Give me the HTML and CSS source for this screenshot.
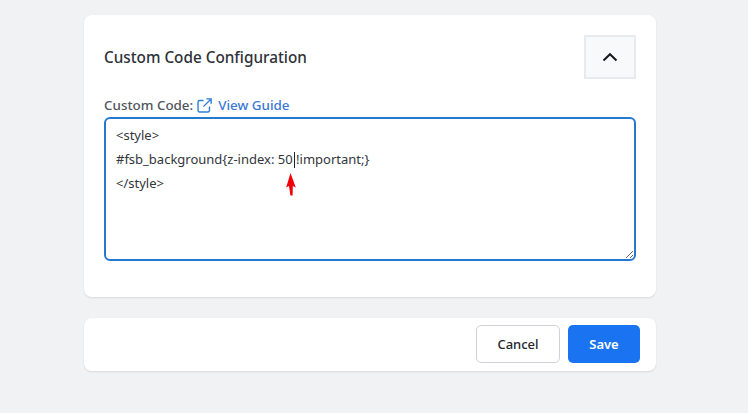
FILE: index.html
```html
<!DOCTYPE html>
<html lang="en">
<head>
  <meta charset="utf-8">
  <title>Custom Code Configuration</title>
  <link rel="stylesheet" href="styles.css">
</head>
<body>
  <div class="container">
    <section class="card config-card">
      <div class="card-header">
        <h2>Custom Code Configuration</h2>
        <button class="toggle-button" type="button" aria-label="Collapse">
          <svg width="16" height="10" viewBox="0 0 16 10"><path d="M1.500 8.500 8 2.200l6.500 6.300" fill="none" stroke="#16181b" stroke-width="2"/></svg>
        </button>
      </div>
      <div class="field-label">
        <span>Custom Code:</span>
        <a href="#" class="guide-link">
          <svg width="15" height="15" viewBox="0 0 16 16" fill="none" stroke="#2f7fd8" stroke-width="1.500">
            <path d="M7 2.700H2.600a1.500 1.500 0 0 0-1.500 1.500v9.200a1.500 1.500 0 0 0 1.500 1.500h9.200a1.500 1.500 0 0 0 1.500-1.500V9"/>
            <path d="M10 .9h5.100V6M15 1 6.800 9.200"/>
          </svg>
          View Guide
        </a>
      </div>
      <div class="code-wrap">
        <textarea class="code-input" spellcheck="false">&lt;style&gt;
#fsb_background{z-index: 50 !important;}
&lt;/style&gt;</textarea>
        <span class="text-caret"></span>
        <svg class="red-arrow" width="10" height="23" viewBox="0 0 10 23"><path d="M4.500 0 9.800 14.500 6.800 13 6.600 22.500 4.400 22.500 3 13 .2 14.500Z" fill="#f00008"/></svg>
      </div>
    </section>

    <section class="card action-card">
      <button class="btn btn-cancel" type="button">Cancel</button>
      <button class="btn btn-save" type="button">Save</button>
    </section>
  </div>
</body>
</html>
```

FILE: styles.css
```css
body {
  font-family: "Noto Sans", Arial, sans-serif;
  margin: 0;
  height: 413px;
  overflow: hidden;
  background-color: #f0f2f4;
}
.container {
  width: 572px;
  margin-left: 84px;
  padding-top: 15px;
}
.card {
  background-color: #fff;
  border-radius: 8px;
  box-shadow: 0 1px 2px rgba(0,0,0,0.1);
}
.config-card {
  height: 282px;
  box-sizing: border-box;
  padding: 20px;
  margin-bottom: 21px;
}
.card-header {
  display: flex;
  justify-content: space-between;
  align-items: center;
  height: 44px;
  margin-bottom: 17px;
}
h2 {
  margin: 0;
  font-size: 15.300px;
  font-weight: 500;
  color: #2e3138;
}
.toggle-button {
  display: flex;
  justify-content: center;
  align-items: center;
  width: 52px;
  height: 44px;
  padding: 0;
  background-color: #f7f9fb;
  border: 2px solid #e8eaed;
}
.field-label {
  display: flex;
  align-items: center;
  gap: 4px;
  height: 18px;
  margin-bottom: 3px;
  font-size: 13.400px;
  font-weight: 500;
  color: #50555c;
}
.guide-link {
  display: flex;
  align-items: center;
  gap: 6px;
  color: #3a78d6;
  text-decoration: none;
}
.code-wrap {
  position: relative;
  height: 144px;
}
.code-input {
  display: block;
  width: 100%;
  height: 100%;
  box-sizing: border-box;
  padding: 4px 10px;
  font-family: "Noto Sans", Arial, sans-serif;
  font-size: 13px;
  line-height: 24px;
  color: #33363b;
  background-color: #fff;
  border: 2px solid #2578d0;
  border-radius: 6px;
  outline: none;
  resize: vertical;
}
.text-caret {
  position: absolute;
  left: 190px;
  top: 35px;
  width: 1px;
  height: 16px;
  background-color: #20242a;
}
.red-arrow {
  position: absolute;
  left: 182px;
  top: 56px;
}
.action-card {
  display: flex;
  justify-content: flex-end;
  gap: 8px;
  height: 53px;
  box-sizing: border-box;
  padding: 7px 16px 8px;
}
.btn {
  font-family: "Noto Sans", Arial, sans-serif;
  font-size: 13px;
  font-weight: 500;
  height: 38px;
  border-radius: 5px;
}
.btn-cancel {
  width: 84px;
  color: #24272c;
  background-color: #fff;
  border: 1px solid #cfd2d6;
}
.btn-save {
  width: 72px;
  font-weight: 600;
  color: #fff;
  background-color: #1a73f0;
  border: none;
}
```
